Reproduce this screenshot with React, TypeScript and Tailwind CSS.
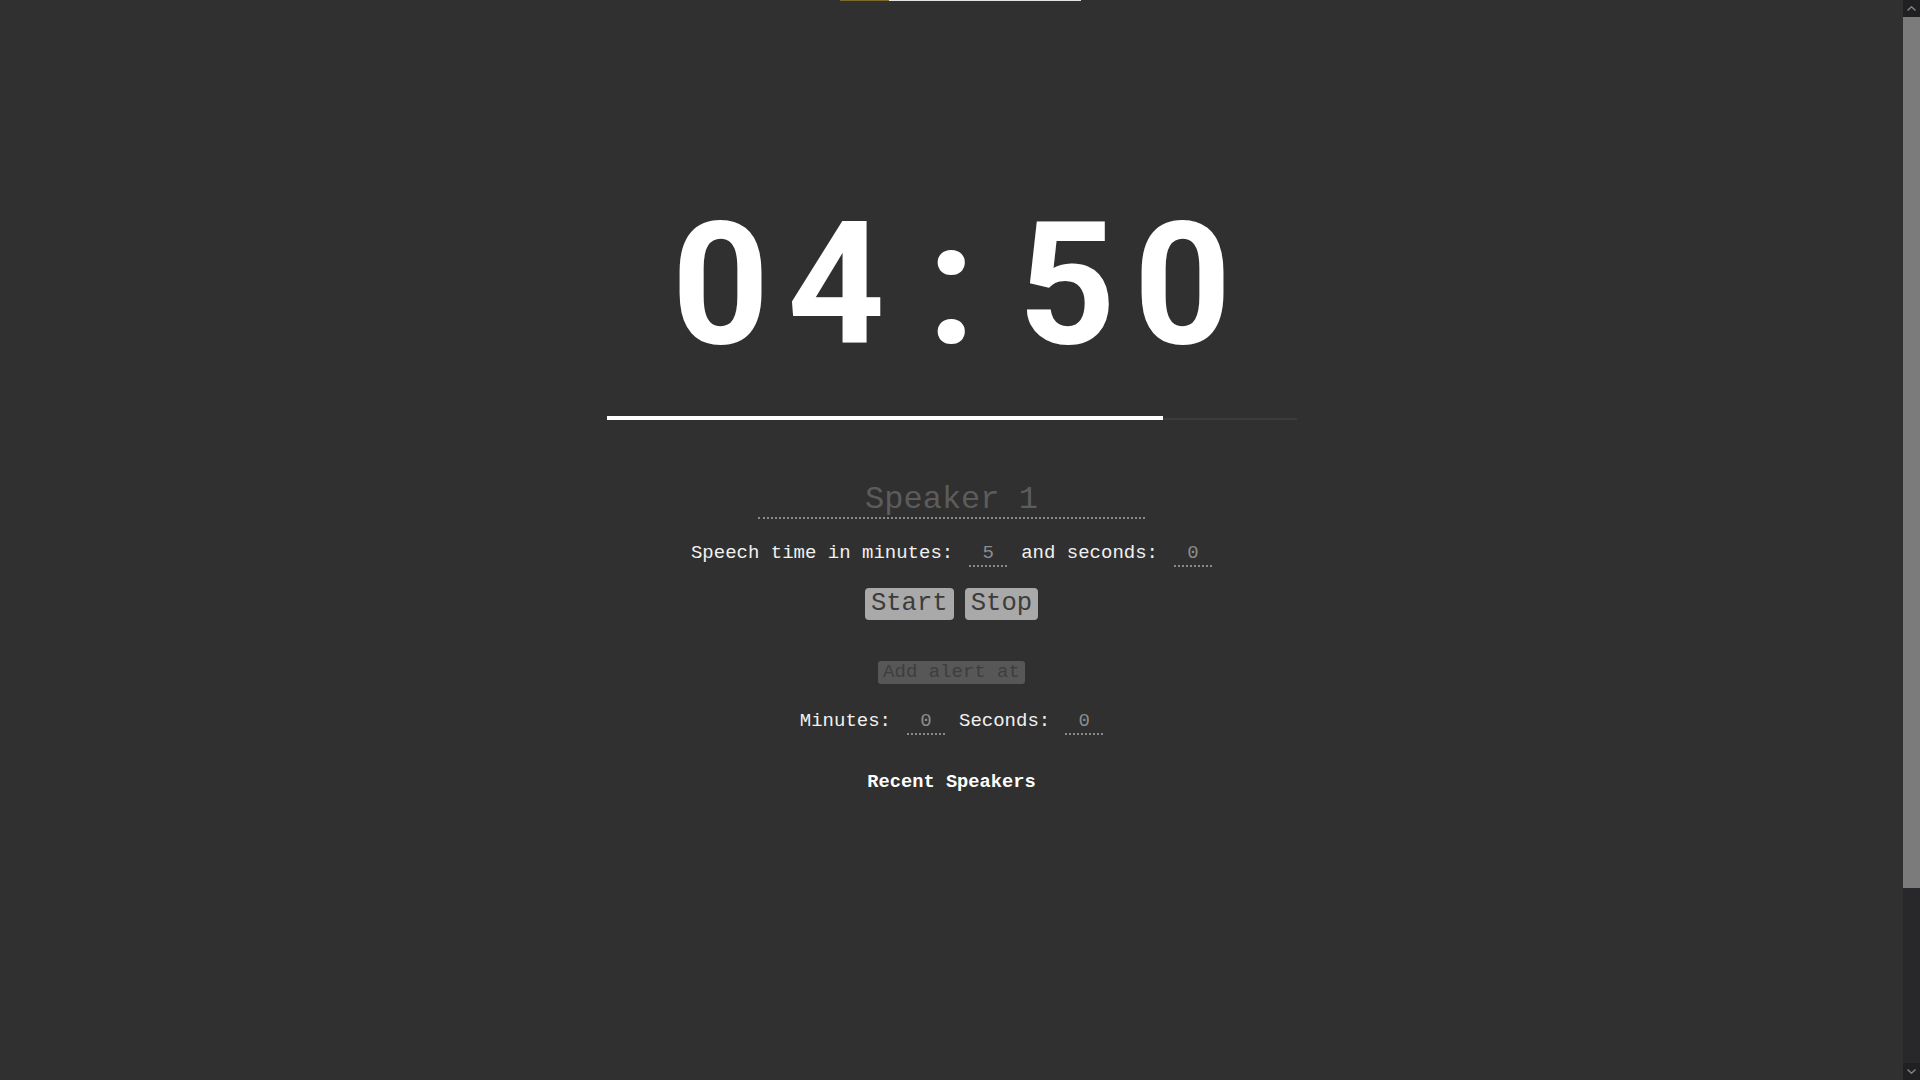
import { useState } from "react";

const mono = { fontFamily: '"Liberation Mono", "Courier New", monospace' };

function TimeInput({ value, onChange }: { value: string; onChange: (v: string) => void }) {
  return (
    <input
      value={value}
      onChange={(e: any) => onChange(e.target.value)}
      className="w-[38px] h-[26px] bg-transparent text-center text-[19px] leading-none text-[#8c8c8c] border-b-2 border-dotted border-[#8a8a8a] outline-none"
      style={mono}
    />
  );
}

function Scrollbar() {
  return (
    <aside className="w-[17px] h-full flex flex-col bg-[#28282a]">
      <div className="h-[17px] flex items-center justify-center bg-[#202022]">
        <svg width="9" height="5" viewBox="0 0 9 5">
          <path d="M0.5 4.5 L4.5 0.8 L8.5 4.5" fill="none" stroke="#8a8a8a" strokeWidth="1.3" />
        </svg>
      </div>
      <div className="h-[871px] bg-[#7b7b7b]"></div>
      <div className="flex-1"></div>
      <div className="h-[17px] flex items-center justify-center bg-[#202022]">
        <svg width="9" height="5" viewBox="0 0 9 5">
          <path d="M0.5 0.5 L4.5 4.2 L8.5 0.5" fill="none" stroke="#8a8a8a" strokeWidth="1.3" />
        </svg>
      </div>
    </aside>
  );
}

export default function App() {
  const [speaker, setSpeaker] = useState("");
  const [minutes, setMinutes] = useState("5");
  const [seconds, setSeconds] = useState("0");
  const [alertMin, setAlertMin] = useState("0");
  const [alertSec, setAlertSec] = useState("0");

  const clock = "04:50";

  return (
    <div className="flex h-screen w-full overflow-hidden bg-[#303030]" style={mono}>
      <main className="flex-1 flex flex-col items-center">
        {/* little alert strip at the very top */}
        <div className="flex h-px ml-[18px]">
          <div className="w-[49px] bg-[#7b6a2d]"></div>
          <div className="w-[192px] bg-[#e4e4e4]"></div>
        </div>

        <div
          className="mt-[199px] h-[170px] flex text-[170px] leading-none font-bold text-white"
          style={{ fontFamily: "Roboto, sans-serif" }}
        >
          {clock.split("").map((c, i) => (
            <span key={i} className="w-[115.5px] text-center">
              {c}
            </span>
          ))}
        </div>

        <div className="mt-[46px] w-[690px] h-[4px] flex items-end">
          <div className="h-full bg-white" style={{ width: "556px" }}></div>
          <div className="flex-1 h-[2px] bg-[#3c3c3c]"></div>
        </div>

        <input
          value={speaker}
          onChange={(e: any) => setSpeaker(e.target.value)}
          placeholder="Speaker 1"
          className="mt-[61px] w-[387px] h-[38px] bg-transparent text-center text-[32px] leading-none text-[#9a9a9a] placeholder:text-[#5c5c5c] border-b-2 border-dotted border-[#8a8a8a] outline-none"
          style={mono}
        />

        <div className="mt-[20px] h-[28px] flex items-center text-[19px] text-[#f0f0f0]">
          <span>Speech time in minutes:</span>
          <span className="ml-[16px]">
            <TimeInput value={minutes} onChange={setMinutes} />
          </span>
          <span className="ml-[14px]">and seconds:</span>
          <span className="ml-[16px]">
            <TimeInput value={seconds} onChange={setSeconds} />
          </span>
        </div>

        <div className="mt-[21px] flex gap-[11px]">
          <button className="h-[32px] px-[6px] rounded-[4px] bg-[#a9a9a9] text-[#3c3c3c] text-[25.6px] leading-none">
            Start
          </button>
          <button className="h-[32px] px-[6px] rounded-[4px] bg-[#a9a9a9] text-[#3c3c3c] text-[25.6px] leading-none">
            Stop
          </button>
        </div>

        <button
          disabled
          className="mt-[41px] h-[23px] px-[5px] rounded-[3px] bg-[#575757] text-[#3e3e3e] text-[19px] leading-none"
        >
          Add alert at
        </button>

        <div className="mt-[23px] h-[28px] flex items-center text-[19px] text-[#f0f0f0]">
          <span>Minutes:</span>
          <span className="ml-[16px]">
            <TimeInput value={alertMin} onChange={setAlertMin} />
          </span>
          <span className="ml-[14px]">Seconds:</span>
          <span className="ml-[15px]">
            <TimeInput value={alertSec} onChange={setAlertSec} />
          </span>
        </div>

        <h3 className="mt-[33px] text-[18.72px] font-bold text-white">Recent Speakers</h3>
      </main>
      <Scrollbar />
    </div>
  );
}
